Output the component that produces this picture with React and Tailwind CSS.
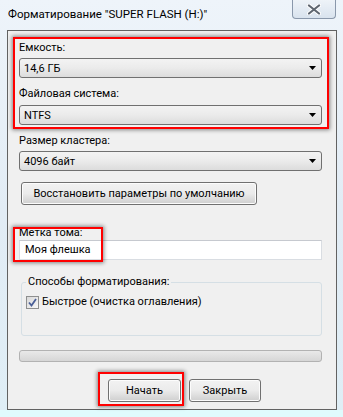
import React from 'react'

const font = { fontFamily: 'Roboto, "Liberation Sans", sans-serif' }

function Combo({ value }) {
  return (
    <div className="h-[20px] rounded-[3px] border border-[#707070] bg-gradient-to-b from-[#f3f3f3] via-[#ebebeb] to-[#dcdcdc] flex items-center justify-between pl-[4px] pr-[5px]">
      <span className="leading-none text-black">{value}</span>
      <svg width="7" height="4" viewBox="0 0 7 4">
        <path d="M0 0h7L3.5 4z" fill="#000" />
      </svg>
    </div>
  )
}

function Button({ children, className = '' }) {
  return (
    <div className={`h-[23px] rounded-[3px] border border-[#707070] bg-gradient-to-b from-[#f2f2f2] via-[#ebebeb] to-[#cfcfcf] shadow-[inset_0_0_0_1px_#fcfcfc] flex items-center justify-center whitespace-nowrap text-black ${className}`}>
      {children}
    </div>
  )
}

function Mark({ className }) {
  return (
    <div className={`absolute border-2 border-[#ff0000] shadow-[0_0_4px_1px_rgba(0,0,0,0.45)] pointer-events-none ${className}`} />
  )
}

export default function App() {
  return (
    <div style={font} className="relative w-[343px] h-[417px] overflow-hidden bg-gradient-to-b from-[#eef4fa] via-[#e2ecf5] to-[#dfeef6] select-none">
      {/* title bar */}
      <div className="h-[30px] flex items-start justify-between">
        <div className="pl-[8px] pt-[6px] text-[11.5px] text-black leading-[16px] whitespace-nowrap">Форматирование "SUPER FLASH (H:)"</div>
        <div className="mr-[7px] w-[44px] h-[19px] rounded-b-[4px] border border-t-0 border-[#8a98ab] bg-gradient-to-b from-[#eef3f8] to-[#d9e3ee] flex items-center justify-center">
          <svg width="14" height="11" viewBox="0 0 14 11">
            <path d="M2 1.5l10 8M12 1.5l-10 8" stroke="#ffffff" strokeWidth="4" strokeLinecap="round" />
            <path d="M2 1.5l10 8M12 1.5l-10 8" stroke="#5f6670" strokeWidth="2.2" strokeLinecap="round" />
          </svg>
        </div>
      </div>

      {/* client area */}
      <div className="ml-[7px] mr-[6px] h-[380px] border border-[#626262] bg-[#f0f0f0] pl-[11px] pr-[14px] pt-[9px] flex flex-col text-[11px] leading-[16px] text-black">
        <div>Емкость:</div>
        <div className="mt-[2px]"><Combo value="14,6 ГБ" /></div>
        <div className="mt-[8px]">Файловая система:</div>
        <div className="mt-[3px]"><Combo value="NTFS" /></div>
        <div className="mt-[8px]">Размер кластера:</div>
        <div className="mt-[2px]"><Combo value="4096 байт" /></div>
        <Button className="mt-[11px] ml-[2px] w-[236px]">Восстановить параметры по умолчанию</Button>
        <div className="mt-[21px] leading-[14px]">Метка тома:</div>
        <div className="h-[20px] bg-white border border-[#d9dde2] border-t-[#c6c9cf] flex items-center pl-[5px]">Моя флешка</div>

        <fieldset className="mt-[14px] ml-[2px] h-[62px] border border-[#d5dfe5] rounded-[3px] pl-[4px]">
          <legend className="px-[2px] leading-[16px]">Способы форматирования:</legend>
          <div className="flex items-center mt-[4px]">
            <div className="w-[13px] h-[13px] border border-[#8e8f8f] bg-gradient-to-br from-[#d9d9d9] to-[#f7f7f7] flex items-center justify-center">
              <svg width="11" height="11" viewBox="0 0 11 11">
                <path d="M2 5.5l2.5 3L9 2" fill="none" stroke="#4a5f97" strokeWidth="1.8" />
              </svg>
            </div>
            <span className="ml-[3px]">Быстрое (очистка оглавления)</span>
          </div>
        </fieldset>

        <div className="mt-[14px] h-[12px] rounded-[3px] border border-[#b2b2b2] bg-gradient-to-b from-[#e9e9e9] to-[#d6d6d6]" />

        <div className="mt-[17px] flex justify-center gap-[8px] pl-[28px]">
          <Button className="w-[73px]">Начать</Button>
          <Button className="w-[72px]">Закрыть</Button>
        </div>
      </div>

      <div className="absolute left-0 right-0 bottom-0 h-[7px] bg-[#e0fbfd]" />

      <Mark className="left-[13px] top-[37px] w-[316px] h-[92px]" />
      <Mark className="left-[13px] top-[227px] w-[90px] h-[35px]" />
      <Mark className="left-[98px] top-[372px] w-[86px] h-[34px]" />
    </div>
  )
}
